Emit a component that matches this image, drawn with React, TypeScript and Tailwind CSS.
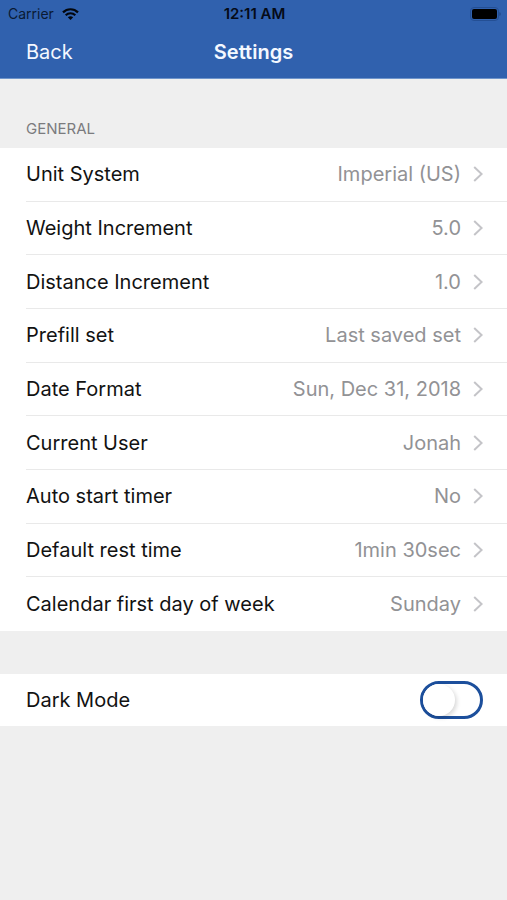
import { useState } from "react";

interface SettingRowProps {
    label: string;
    value: string;
}

const settings: SettingRowProps[] = [
    { label: "Unit System", value: "Imperial (US)" },
    { label: "Weight Increment", value: "5.0" },
    { label: "Distance Increment", value: "1.0" },
    { label: "Prefill set", value: "Last saved set" },
    { label: "Date Format", value: "Sun, Dec 31, 2018" },
    { label: "Current User", value: "Jonah" },
    { label: "Auto start timer", value: "No" },
    { label: "Default rest time", value: "1min 30sec" },
    { label: "Calendar first day of week", value: "Sunday" },
];

function StatusBar() {
    return (
        <div className="grid grid-cols-3 items-center h-7 pl-2 pr-1.5 text-[#0a1a33]">
            <div className="flex items-center gap-2">
                <span className="text-sm">Carrier</span>
                <svg className="w-[17px] h-3 text-[#02060d]" viewBox="0 0 17 12" fill="none" stroke="currentColor" strokeWidth="2.2" aria-hidden="true">
                    <path d="M1 4.4C5.2.2 11.8.2 16 4.4" />
                    <path d="M3.7 7.2C6.4 4.6 10.6 4.6 13.3 7.2" />
                    <path d="M8.5 12 5.8 9.3C7.4 7.9 9.6 7.9 11.2 9.3Z" fill="currentColor" stroke="none" />
                </svg>
            </div>
            <span className="text-center text-[15px] leading-5 font-semibold text-[#050b18]">12:11 AM</span>
            <svg className="w-[31px] h-[14px] justify-self-end" viewBox="0 0 31 14" aria-hidden="true">
                <rect x="0.5" y="0.5" width="28" height="13" rx="3.5" fill="none" stroke="#244f94" />
                <rect x="2" y="2" width="25" height="10" rx="2" fill="#000" />
                <path d="M29.5 5C31 5.5 31 8.5 29.5 9Z" fill="#1d427f" />
            </svg>
        </div>
    );
}

function SettingRow({ label, value }: SettingRowProps) {
    return (
        <li className="group pl-[26px]">
            <button type="button" className="flex items-center justify-between w-full h-full pr-6 border-b border-[#e9e9e9] group-last:border-transparent">
                <span>{label}</span>
                <span className="flex items-center gap-3 text-[#929295]">
                    {value}
                    <svg className="w-[10px] h-4" viewBox="0 0 10 16" fill="none" stroke="#c4c4c8" strokeWidth="2" aria-hidden="true">
                        <path d="M1.2 1 8.6 8 1.2 15" />
                    </svg>
                </span>
            </button>
        </li>
    );
}

export default function App() {
    const [darkMode, setDarkMode] = useState(false);

    return (
        <div className="min-h-screen bg-[#efefef] font-['Inter','Liberation_Sans',sans-serif] text-xl text-[#121212]">
            <header className="bg-[#3061ae] border-b border-[#6f95cb]">
                <StatusBar />
                <div className="grid grid-cols-3 items-center h-[50px] pb-0.5 px-[26px] text-[#f4f8ff]">
                    <button type="button" className="justify-self-start">Back</button>
                    <h1 className="text-center font-semibold">Settings</h1>
                </div>
            </header>

            <main>
                <section>
                    <h2 className="pt-10 pb-[9px] px-[26px] text-[15px] leading-5 text-[#7b7b7e]">GENERAL</h2>
                    <ul className="grid auto-rows-fr min-h-[483px] bg-white">
                        {settings.map((setting) => (
                            <SettingRow key={setting.label} {...setting} />
                        ))}
                    </ul>
                </section>

                <section className="flex items-center justify-between h-[52px] mt-[43px] pl-[26px] pr-6 bg-white">
                    <label htmlFor="dark-mode">Dark Mode</label>
                    <span className="relative flex">
                        <input
                            id="dark-mode"
                            type="checkbox"
                            role="switch"
                            checked={darkMode}
                            onChange={(e) => setDarkMode(e.target.checked)}
                            className="peer appearance-none w-[63px] h-[38px] rounded-full border-[3px] border-[#1c4f9c] bg-white checked:bg-[#3061ae]"
                        />
                        <span className="pointer-events-none absolute top-[3px] left-[3px] size-8 rounded-full bg-white shadow-[2px_2px_4px_rgba(0,0,0,0.15)] peer-checked:left-7" />
                    </span>
                </section>
            </main>
        </div>
    );
}
